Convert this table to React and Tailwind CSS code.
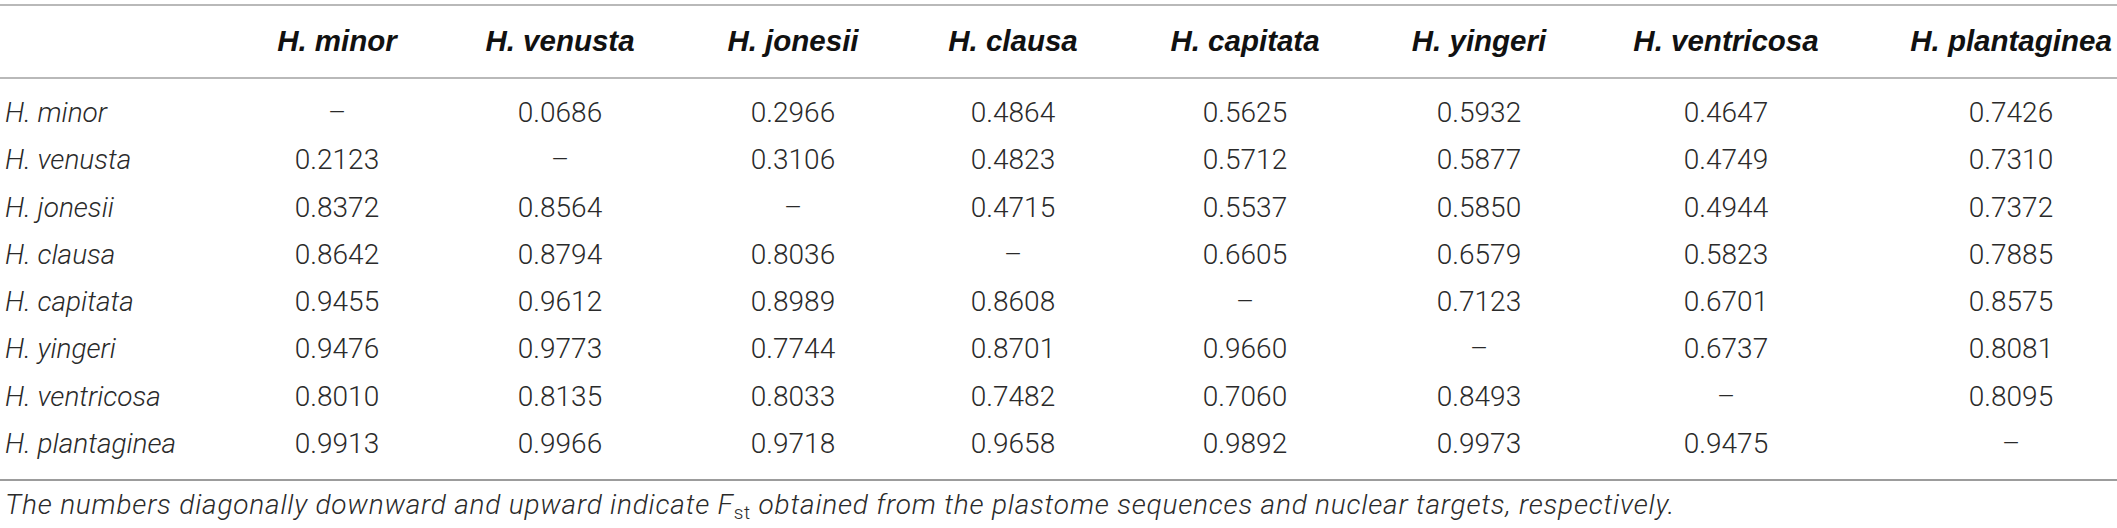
import React from "react";

const species = [
  "H. minor",
  "H. venusta",
  "H. jonesii",
  "H. clausa",
  "H. capitata",
  "H. yingeri",
  "H. ventricosa",
  "H. plantaginea",
];

const rows = [
  ["–", "0.0686", "0.2966", "0.4864", "0.5625", "0.5932", "0.4647", "0.7426"],
  ["0.2123", "–", "0.3106", "0.4823", "0.5712", "0.5877", "0.4749", "0.7310"],
  ["0.8372", "0.8564", "–", "0.4715", "0.5537", "0.5850", "0.4944", "0.7372"],
  ["0.8642", "0.8794", "0.8036", "–", "0.6605", "0.6579", "0.5823", "0.7885"],
  ["0.9455", "0.9612", "0.8989", "0.8608", "–", "0.7123", "0.6701", "0.8575"],
  ["0.9476", "0.9773", "0.7744", "0.8701", "0.9660", "–", "0.6737", "0.8081"],
  ["0.8010", "0.8135", "0.8033", "0.7482", "0.7060", "0.8493", "–", "0.8095"],
  ["0.9913", "0.9966", "0.9718", "0.9658", "0.9892", "0.9973", "0.9475", "–"],
];

const cols =
  "grid grid-cols-[193px_288px_158px_308px_132px_332px_136px_358px_212px]";

export default function App() {
  return (
    <div className="w-[2117px] bg-white pt-[4px] text-[#2a2a2a]">
      <div className="h-[2px] bg-[#b9b9b9]" />
      <div
        className={`${cols} h-[71px] items-center font-['Liberation_Sans',Arial,sans-serif] text-[29.5px] font-bold italic text-[#111]`}
      >
        <div />
        {species.map((s) => (
          <div key={s} className="whitespace-nowrap text-center">
            {s}
          </div>
        ))}
      </div>
      <div className="h-[2px] bg-[#b9b9b9]" />
      <div className="pt-[10px] pb-[12px] font-['Roboto',Arial,sans-serif] text-[28px] font-light">
        {rows.map((r, i) => (
          <div key={species[i]} className={`${cols} h-[47.3px] leading-[47.3px]`}>
            <div className="whitespace-nowrap pl-[5px] italic">{species[i]}</div>
            {r.map((v, j) => (
              <div key={j} className="whitespace-nowrap text-center">
                {v}
              </div>
            ))}
          </div>
        ))}
      </div>
      <div className="h-[2px] bg-[#9c9c9c]" />
      <p className="pl-[5px] pt-[4px] font-['Roboto',Arial,sans-serif] text-[28px] font-light italic leading-[40px] tracking-[0.8px] text-[#2a2a2a]">
        The numbers diagonally downward and upward indicate F
        <sub className="text-[19px] not-italic">st</sub> obtained from the
        plastome sequences and nuclear targets, respectively.
      </p>
    </div>
  );
}
